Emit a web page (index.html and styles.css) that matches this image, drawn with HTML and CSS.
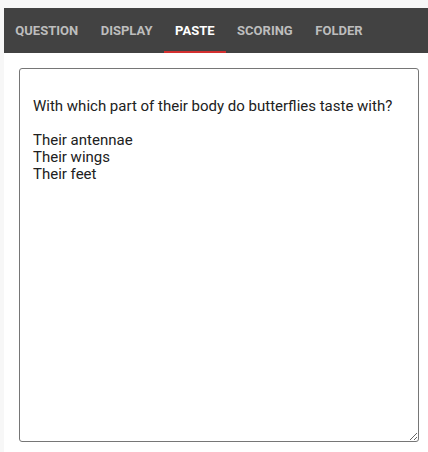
FILE: index.html
```html
<!DOCTYPE html>
<html>
<head>
<meta charset="utf-8">
<link rel="stylesheet" href="styles.css">
</head>
<body>
<div class="panel">
  <nav class="tabs">
    <div class="tab">QUESTION</div>
    <div class="tab">DISPLAY</div>
    <div class="tab active">PASTE</div>
    <div class="tab">SCORING</div>
    <div class="tab">FOLDER</div>
  </nav>
  <div class="content">
    <textarea class="paste">

With which part of their body do butterflies taste with?

Their antennae
Their wings
Their feet</textarea>
  </div>
</div>
</body>
</html>
```
FILE: styles.css
```css
html, body {
  margin: 0;
  padding: 0;
}
body {
  background: #f7f7f7;
  padding: 8px 0 0 4px;
  height: 452px;
  box-sizing: border-box;
  overflow: hidden;
  font-family: Roboto, "Liberation Sans", sans-serif;
}
.panel {
  background: #ffffff;
  height: 100%;
}
.tabs {
  display: flex;
  height: 45px;
  background: #424242;
}
.tab {
  display: flex;
  align-items: center;
  padding: 1px 11.3px 0;
  height: 45px;
  box-sizing: border-box;
  font-size: 13px;
  font-weight: 700;
  color: #bdbdbd;
  border-bottom: 2px solid transparent;
}
.tab.active {
  color: #ffffff;
  border-bottom-color: #d32f2f;
}
.content {
  padding: 15px;
}
.paste {
  display: block;
  width: 400px;
  height: 374px;
  box-sizing: border-box;
  margin: 0;
  padding: 12px 13px;
  border: 1px solid #767676;
  border-radius: 3px;
  font-family: Roboto, "Liberation Sans", sans-serif;
  font-size: 15px;
  line-height: 17px;
  color: #212121;
  background: #ffffff;
}
```
